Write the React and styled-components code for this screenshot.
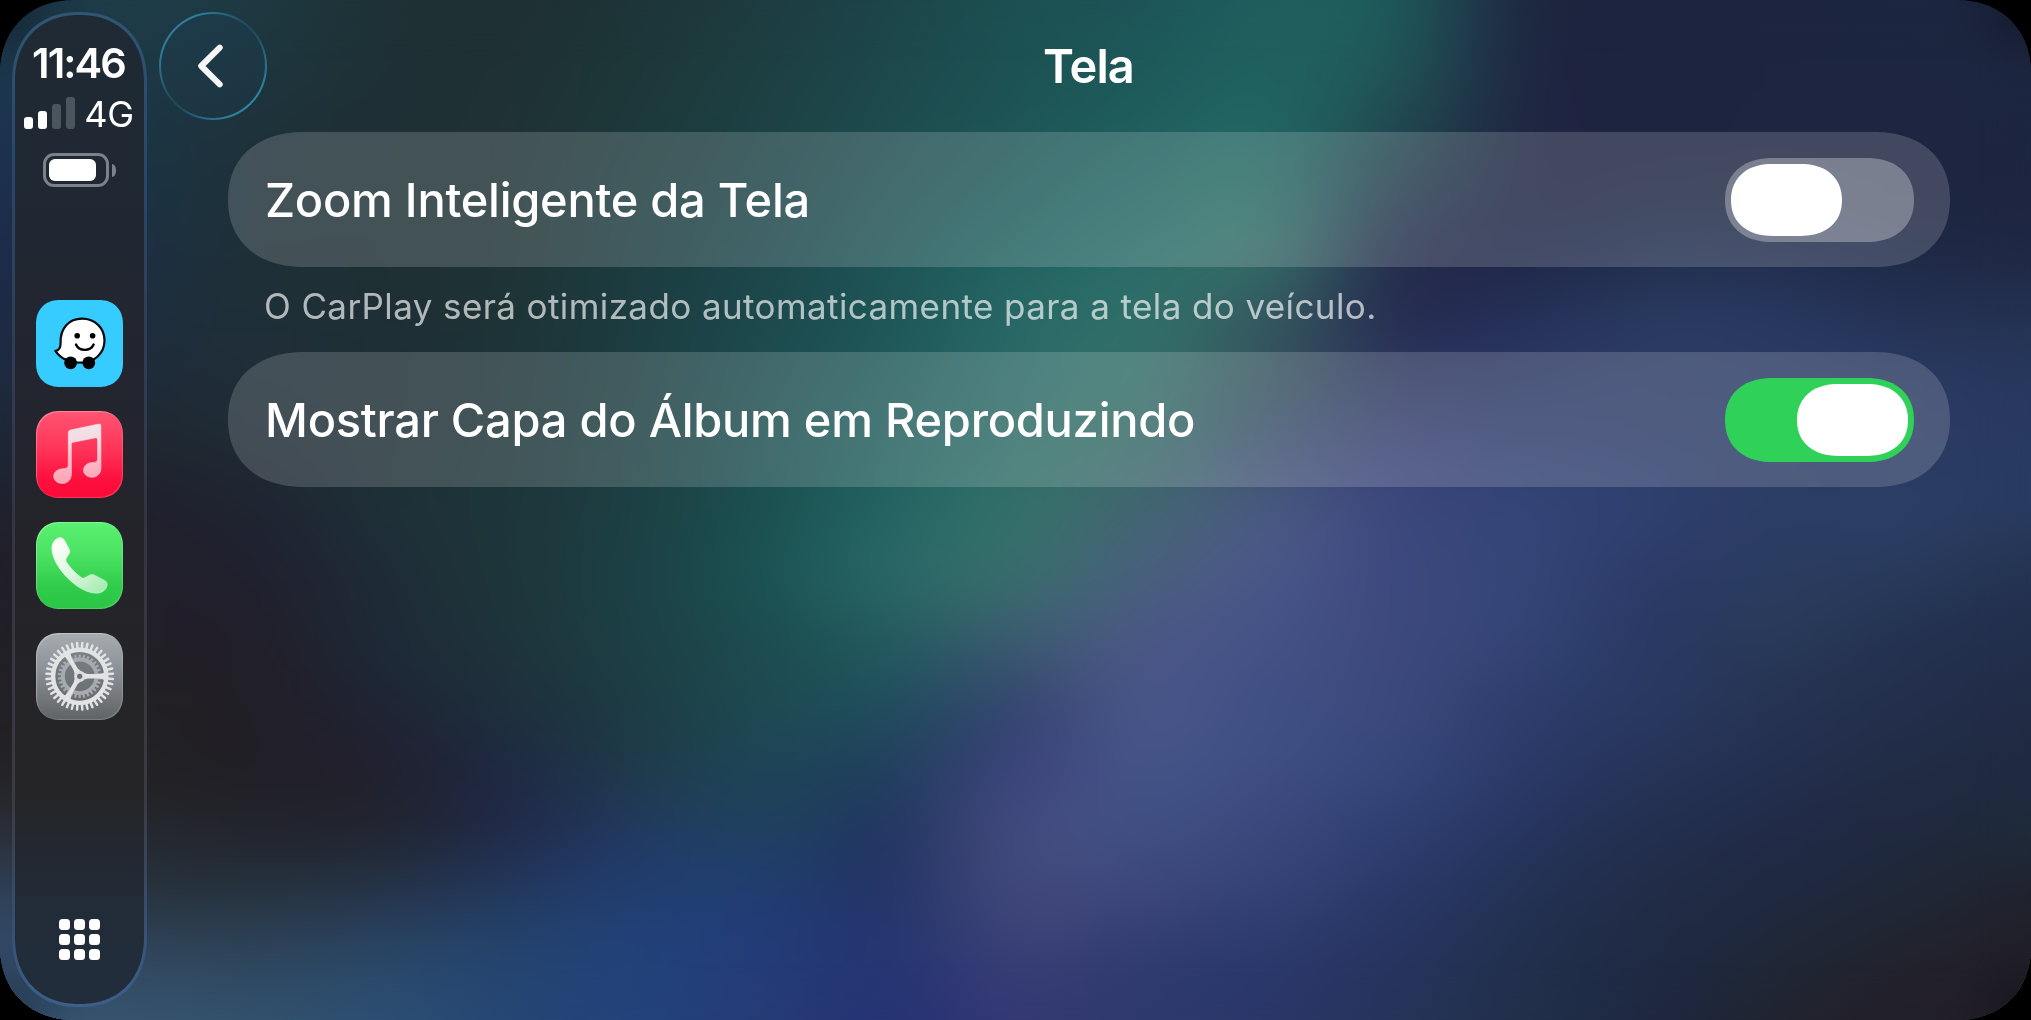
import React from "react";
import styled, { createGlobalStyle, css } from "styled-components";

const GlobalStyle = createGlobalStyle`
  * { box-sizing: border-box; }
  html, body { margin: 0; padding: 0; background: #000; }
  body {
    width: 100vw;
    height: 100vh;
    overflow: hidden;
    font-family: Inter, "Liberation Sans", sans-serif;
    color: #fff;
  }
`;

/* Wallpaper: evenly spaced colour samples, one string per row */
const WALLPAPER = [
  "1d3a4c 1f3c49 1e3a42 1f3236 1f3033 1e3538 1e3c40 1d454a 1d5052 1e5457 1e5f5e 1f5759 1f2a41 1d2540 1d2540 1d2640 1e2741",
  "1e374e 1e3947 1e363f 1e3136 1f3134 1d3739 1e3f42 1d484c 1d5254 1e595a 1f615f 205457 1f2843 1d2540 1d2540 1d2640 1e2741",
  "1e3350 1c3545 1e323b 1e3035 1f3235 1d393b 1d4144 1e4b4e 1e5556 1f5e5d 216462 20484f 1f2742 1d2440 1d2540 1d2540 1d2640",
  "1e2f4d 1c3243 1e313a 1e3035 1f3335 1c3b3e 1c4347 1f4f52 1f5b5b 236562 286963 233d4f 1f2745 1e2843 1f2844 1d2540 1e2641",
  "1d2b4a 1d2f42 1e3038 1e3034 1f3335 1c3c40 1c464a 1f5456 216260 2a6b67 346a66 252f4d 202848 212e4e 222e4e 1f2a47 202844",
  "1e2b45 1e2d3e 1f2f38 1e2f35 1e3437 1c3d41 1d494d 1f5658 286866 306e69 34555f 272e52 26315a 2a3a60 283860 253256 243352",
  "1f2a40 1e2a3a 202e38 1e2f35 1d3438 1c3e41 1d4c4f 215b5b 2b6866 356d68 36545f 2d3960 2b3864 2d3b66 2a3b65 2a3a62 28375d",
  "1f2636 20272f 1f2b34 1e2f35 1d3538 1d4043 1d4f51 235f5d 2f6b66 366967 3d5070 394274 313f6d 2e3e6a 2c3d67 2b3b64 293a61",
  "20222f 20202e 1f2431 1e3038 1e363b 1d4044 1c5050 236362 34706a 446572 495a80 3c487c 344577 304070 2c3d64 2c3e65 293b60",
  "211f29 211f2a 20212f 1f2b37 1d363a 1c4146 1c5354 2b6767 386d6c 47607c 495688 3d497e 354576 2c3b68 2b3c61 283a5c 243350",
  "222027 211f27 211f2a 1e2a37 1e343b 1d4045 1d4c50 235b5e 3c5c70 4a5784 445285 3d497c 344475 2a3963 293a59 243250 222f4d",
  "232127 222125 221f27 1f2535 1e303c 1d3c45 1e4a51 224f5e 35476f 485587 404f84 3c487b 2e3d6c 293961 263352 232f4d 222c46",
  "242325 222224 211f26 222130 1e2a42 1f3a49 1e4557 22405e 3a437a 455487 3e4d82 36477a 2b3a68 27345a 243050 212c45 202a42",
  "2b2f38 25282e 23242d 20252f 212a48 213960 20415f 233762 424b7d 3f4f82 3b477c 2f3f70 273560 22304f 212b48 20293f 1f2b3b",
  "304258 28343f 26333f 26344a 22395e 223e70 213d72 253568 40487a 3d467a 344274 2a3868 233254 222c47 1f2940 1f2838 20232e",
  "344c6c 31475f 2f455c 2a4767 25446e 22427a 243c78 263672 393f76 303c70 2b386b 27345f 22304e 1f2a44 1f2838 22232d 222028",
  "365472 38556f 33526f 2d4f73 264775 24427a 263c76 263374 333873 2e396c 2b3768 263459 22304a 1f2840 22242f 231f2a 22202a",
].map((row) =>
  row.split(" ").map((hex) => [0, 2, 4].map((i) => parseInt(hex.slice(i, i + 2), 16)))
);

const spline = (p0, p1, p2, p3, t) =>
  p1.map((v, i) => {
    const a = p0[i], c = p2[i], d = p3[i];
    return v + 0.5 * t * (c - a + t * (2 * a - 5 * v + 4 * c - d + t * (3 * (v - c) + d - a)));
  });

const densify = (points, steps, mix) => {
  const out = [];
  const at = (i) => points[Math.max(0, Math.min(points.length - 1, i))];
  for (let i = 0; i < points.length - 1; i++) {
    for (let s = 0; s < steps; s++) out.push(mix(at(i - 1), at(i), at(i + 1), at(i + 2), s / steps));
  }
  out.push(points[points.length - 1]);
  return out;
};

const BANDS = densify(
  WALLPAPER.map((row) => densify(row, 4, spline)),
  2,
  (a, b, c, d, t) => b.map((_, i) => spline(a[i], b[i], c[i], d[i], t))
);

const toStops = (row) =>
  row.map((c) => `rgb(${c.map((v) => Math.max(0, v).toFixed(1)).join(" ")})`).join(",");

const continuous = css`
  corner-shape: superellipse(1.15);
`;

const Screen = styled.div`
  position: relative;
  display: flex;
  width: 2031px;
  height: 1020px;
  padding: 12px 0 12px 12px;
  border-radius: 76px;
  ${continuous}
  overflow: hidden;
  isolation: isolate;
`;

const Wallpaper = styled.div`
  position: absolute;
  inset: 0;
  z-index: -1;
`;

const Band = styled.div`
  position: absolute;
  inset: 0;
`;

const Soften = styled.div`
  position: absolute;
  inset: 0;
  backdrop-filter: blur(26px);
`;

const Dock = styled.aside`
  display: flex;
  flex-direction: column;
  align-items: center;
  flex: none;
  width: 135px;
  height: 995px;
  padding: 26px 0 44px;
  border: 3px solid transparent;
  border-radius: 67px / 70px;
  ${continuous}
  background:
    linear-gradient(180deg, #1f2a34 0%, #1f2833 14%, #23252f 38%, #242329 55%, #252527 78%, #222b38 90%, #212d3b 100%) padding-box,
    linear-gradient(180deg, #2f5672 0%, #28486a 14%, #2f3d56 34%, #35343f 52%, #3b3b45 80%, #365075 92%, #3d6088 100%) border-box;
`;

const Clock = styled.time`
  padding-right: 2px;
  font-size: 41.5px;
  line-height: 44px;
  font-weight: 600;
  letter-spacing: -1.9px;
`;

const Network = styled.div`
  display: flex;
  align-items: flex-end;
  gap: 9px;
  height: 36px;
  margin-top: 11px;
  padding-right: 1px;
`;

const Bars = styled.div`
  display: flex;
  align-items: flex-end;
  gap: 5px;
  padding-bottom: 3px;
`;

const Bar = styled.span`
  width: 9px;
  height: ${(p) => p.$height}px;
  border-radius: 3px;
  background: ${(p) => (p.$on ? "#fff" : "#4b555d")};
`;

const Carrier = styled.span`
  font-size: 36px;
  line-height: 36px;
  letter-spacing: -0.4px;
`;

const Battery = styled.div`
  display: flex;
  align-items: center;
  gap: 3px;
  margin-top: 21px;
`;

const BatteryShell = styled.div`
  width: 66px;
  height: 34px;
  padding: 3px;
  border: 3px solid #7b828a;
  border-radius: 11px;
`;

const BatteryLevel = styled.div`
  width: 47px;
  height: 22px;
  border-radius: 6px;
  background: #fff;
`;

const BatteryTip = styled.span`
  width: 4px;
  height: 13px;
  border-radius: 0 4px 4px 0 / 0 6px 6px 0;
  background: #7b828a;
`;

const Apps = styled.nav`
  display: flex;
  flex-direction: column;
  gap: 24px;
  margin-top: 113px;
`;

const AppIcon = styled.button`
  display: block;
  width: 87px;
  height: 87px;
  padding: 0;
  border: 0;
  border-radius: 24px;
  ${continuous}
  background: ${(p) => p.$fill};
  box-shadow: ${(p) => (p.$rim ? "inset 1px 1px 1px rgba(255,255,255,.3), inset -1px -1px 1px rgba(255,255,255,.18)" : "none")};
  svg { display: block; }
`;

const HomeButton = styled.button`
  display: grid;
  grid-template-columns: repeat(3, 11.5px);
  gap: 3.5px;
  margin-top: auto;
  padding: 0;
  border: 0;
  background: none;
`;

const Dot = styled.span`
  height: 11.5px;
  border-radius: 3.5px;
  background: #fff;
`;

const Main = styled.main`
  display: flex;
  flex-direction: column;
  flex: 1;
  padding-right: 81px;
`;

const Header = styled.header`
  display: grid;
  grid-template-columns: 108px 1fr 40px;
  align-items: center;
  height: 108px;
  padding-left: 12px;
`;

const BackButton = styled.button`
  display: grid;
  place-items: center;
  width: 108px;
  height: 108px;
  padding: 0;
  border: 2px solid transparent;
  border-radius: 50%;
  background:
    linear-gradient(160deg, #1d3b4a, #1d3440) padding-box,
    linear-gradient(135deg, #2c7795 0%, #2f7f9c 18%, #1f4c5f 45%, #1f4c5f 55%, #2f86a6 85%, #2c7795 100%) border-box;
`;

const Title = styled.h1`
  margin: 0;
  font-size: 47px;
  line-height: 56px;
  font-weight: 600;
  letter-spacing: -0.9px;
  text-align: center;
`;

const Settings = styled.section`
  display: flex;
  flex-direction: column;
  margin: 12px 0 0 81px;
`;

const Row = styled.label`
  display: flex;
  align-items: center;
  justify-content: space-between;
  height: 135px;
  padding: 0 36px 0 37px;
  border-radius: 76px / 67.5px;
  ${continuous}
  background: rgba(255, 255, 255, 0.165);
`;

const RowLabel = styled.span`
  font-size: 47px;
  line-height: 60px;
  font-weight: 500;
  letter-spacing: -0.26px;
  white-space: nowrap;
`;

const Caption = styled.p`
  height: 85px;
  margin: 0;
  padding: 14px 0 0 36px;
  font-size: 35px;
  line-height: 50px;
  letter-spacing: 0.4px;
  color: rgba(255, 255, 255, 0.66);
  white-space: nowrap;
`;

const Toggle = styled.span`
  display: flex;
  justify-content: ${(p) => (p.$on ? "flex-end" : "flex-start")};
  width: 189px;
  height: 84px;
  padding: 6px;
  border-radius: 47px / 42px;
  ${continuous}
  background: ${(p) => (p.$on ? "#30d158" : "rgba(255, 255, 255, 0.3)")};
`;

const Knob = styled.span`
  width: 111px;
  height: 72px;
  border-radius: 41px / 36px;
  ${continuous}
  background: #fff;
`;

function WazeGlyph() {
  return (
    <svg width="87" height="87" viewBox="0 0 87 87">
      <path
        d="M24.6 43C24 28 33 18.7 46 18.7C59 18.7 68.5 28 68.5 40.5C68.5 53 58.5 62.6 45.5 62.6C34 62.6 24.5 58.5 19.3 50.8C22.8 50.6 24.6 48 24.6 43Z"
        fill="#fff" stroke="#06090c" strokeWidth="2.2" strokeLinejoin="round"
      />
      <circle cx="34.6" cy="62.8" r="6.4" fill="#000" />
      <circle cx="52.8" cy="62.8" r="6.4" fill="#000" />
      <circle cx="41.2" cy="35.8" r="2.8" fill="#000" />
      <circle cx="56.6" cy="35.8" r="2.8" fill="#000" />
      <path d="M40 44.5C43 51.6 54.6 51.6 57.6 44.5" fill="none" stroke="#000" strokeWidth="2.4" strokeLinecap="round" />
    </svg>
  );
}

function MusicGlyph() {
  return (
    <svg width="87" height="87" viewBox="0 0 87 87">
      <defs>
        <linearGradient id="note" x1="0" y1="0" x2="0" y2="1">
          <stop offset="0" stopColor="#f1e4e9" />
          <stop offset=".34" stopColor="#f0d9df" />
          <stop offset=".6" stopColor="#ffb9c6" />
          <stop offset="1" stopColor="#ffa3b5" />
        </linearGradient>
      </defs>
      <path
        d="M32.3 21.6Q32.3 19.6 34.2 19.1L62.8 13Q64.9 12.7 64.9 14.8V57C64.9 62.8 61 66.2 56.1 66.2C51.2 66.2 47.6 63.3 47.6 59.3C47.6 55.1 50.8 52.2 55.6 51.7L58.6 51.4Q61.6 50.9 61.6 48.4V28.4Q61.6 26.4 59.6 26.8L36.9 31.3Q35.3 31.7 35.3 33.4V63C35.3 68.8 31.4 72.4 26.4 72.4C21.4 72.4 17.8 69.5 17.8 65.4C17.8 61.3 21 58.5 25.6 58L29 57.6Q32.3 57.1 32.3 54.4Z"
        fill="url(#note)" stroke="#ffdfe6" strokeOpacity=".75" strokeWidth=".8"
      />
    </svg>
  );
}

function PhoneGlyph() {
  return (
    <svg width="87" height="87" viewBox="0 0 87 87">
      <defs>
        <linearGradient id="handset" x1="0" y1="0" x2="1" y2="1">
          <stop offset=".1" stopColor="#fbfffb" />
          <stop offset=".5" stopColor="#dcf7e0" />
          <stop offset=".9" stopColor="#a9edb4" />
        </linearGradient>
      </defs>
      <path
        d="M15.8 26.5C15.8 21.5 18.4 17.4 22 16C25 14.9 27.2 15.9 28.8 18.8L33 26.6C34.2 29 34 30.6 32.6 32.8L30.4 36.2C29.5 37.8 29.8 39 31 40.8C34.5 46 40 51.8 45.4 55.4C46.8 56.3 47.9 56.3 49.2 55.5L53.4 53.2C55.2 52.3 56.8 52.3 58.6 53.2L68.6 58.4C71 59.8 71.8 61.8 70.9 64.4C69.4 68.6 65.4 71.2 60.4 71.2C52 71.2 42.4 66.2 33.4 57.8C22.6 47.7 15.8 35.6 15.8 26.5Z"
        fill="url(#handset)" stroke="#f2fff4" strokeOpacity=".6" strokeWidth=".7"
      />
    </svg>
  );
}

function teeth(count, inner, outer) {
  return Array.from({ length: count }, (_, i) => {
    const a = ((i + 0.5) / count) * Math.PI * 2;
    const x = Math.cos(a), y = Math.sin(a);
    return `M${x * inner} ${y * inner}L${x * outer} ${y * outer}`;
  }).join("");
}

function GearGlyph() {
  return (
    <svg width="87" height="87" viewBox="-43.7 -43.3 87 87" fill="none">
      <circle r="26" fill="#62666b" fillOpacity=".55" />
      <circle r="16.8" stroke="#a6abaf" strokeWidth="3.8" />
      <path d={teeth(30, 17.5, 21.8)} stroke="#a6abaf" strokeWidth="2.2" />
      <circle r="26.6" stroke="#e2e3e5" strokeWidth="4.4" />
      <path d={teeth(40, 28, 33.4)} stroke="#e2e3e5" strokeWidth="2.5" strokeLinecap="round" />
      {[0, 120, 240].map((deg) => (
        <path key={deg} transform={`rotate(${deg})`} d="M2 -4L8 -2.2H20Q24 -2.4 26.5 -5.4V5.4Q24 2.4 20 2.2H8L2 4Z" fill="#e2e3e5" />
      ))}
      <circle r="5.6" fill="#dcdddf" />
      <circle r="2.6" fill="#6b7075" />
    </svg>
  );
}

const APPS = [
  { name: "Waze", fill: "#37ccff", Glyph: WazeGlyph },
  { name: "Música", fill: "linear-gradient(#ff5573, #ff3358 45%, #fd0f3c 80%, #fb0a38)", rim: true, Glyph: MusicGlyph },
  { name: "Telefone", fill: "linear-gradient(#5af070, #4be263 38%, #2fcb4a 75%, #2bc645)", rim: true, Glyph: PhoneGlyph },
  { name: "Ajustes", fill: "linear-gradient(#a6adb1, #8a8f95 45%, #5f6266)", rim: true, Glyph: GearGlyph },
];

const SIGNAL = [12, 18, 25, 32];

function SettingRow({ label, on }) {
  return (
    <Row>
      <RowLabel>{label}</RowLabel>
      <Toggle $on={on} role="switch" aria-checked={on}>
        <Knob />
      </Toggle>
    </Row>
  );
}

export default function App() {
  const last = BANDS.length - 1;
  return (
    <>
      <GlobalStyle />
      <Screen>
        <Wallpaper aria-hidden="true">
          {BANDS.map((row, i) => {
            const mask =
              i === 0 ? "none" : `linear-gradient(transparent ${((i - 1) / last) * 100}%, #000 ${(i / last) * 100}%)`;
            return (
              <Band key={i} style={{ background: `linear-gradient(90deg, ${toStops(row)})`, maskImage: mask }} />
            );
          })}
          <Soften />
        </Wallpaper>
        <Dock>
          <Clock>11:46</Clock>
          <Network>
            <Bars>
              {SIGNAL.map((h, i) => (
                <Bar key={h} $height={h} $on={i < 2} />
              ))}
            </Bars>
            <Carrier>4G</Carrier>
          </Network>
          <Battery>
            <BatteryShell>
              <BatteryLevel />
            </BatteryShell>
            <BatteryTip />
          </Battery>
          <Apps>
            {APPS.map(({ name, fill, rim, Glyph }) => (
              <AppIcon key={name} aria-label={name} $fill={fill} $rim={rim}>
                <Glyph />
              </AppIcon>
            ))}
          </Apps>
          <HomeButton aria-label="Início">
            {Array.from({ length: 9 }, (_, i) => (
              <Dot key={i} />
            ))}
          </HomeButton>
        </Dock>
        <Main>
          <Header>
            <BackButton aria-label="Voltar">
              <svg width="40" height="50" viewBox="0 0 40 50" fill="none">
                <path d="M26.7 6.6L8.2 25L26.7 43.4" stroke="#f6f6f7" strokeWidth="6" strokeLinecap="round" strokeLinejoin="round" />
              </svg>
            </BackButton>
            <Title>Tela</Title>
          </Header>
          <Settings>
            <SettingRow label="Zoom Inteligente da Tela" on={false} />
            <Caption>O CarPlay será otimizado automaticamente para a tela do veículo.</Caption>
            <SettingRow label="Mostrar Capa do Álbum em Reproduzindo" on />
          </Settings>
        </Main>
      </Screen>
    </>
  );
}
